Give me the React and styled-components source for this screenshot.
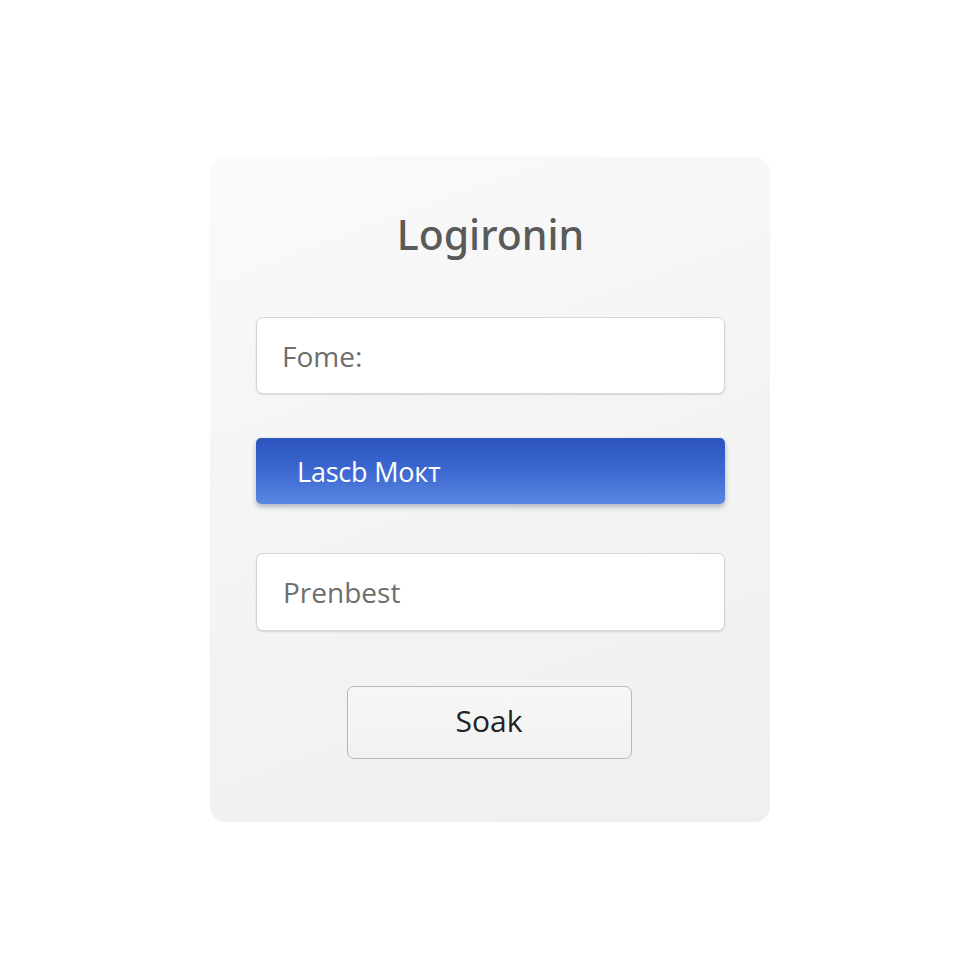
import React from "react";
import styled, { createGlobalStyle } from "styled-components";

const Global = createGlobalStyle`
  html, body { margin: 0; padding: 0; background: #ffffff; }
  body { font-family: "Open Sans", "Noto Sans", "Liberation Sans", sans-serif; }
`;

const Page = styled.div`
  width: 980px;
  height: 980px;
  display: flex;
  justify-content: center;
  padding-top: 157px;
  box-sizing: border-box;
`;

const Card = styled.div`
  width: 560px;
  height: 665px;
  box-sizing: border-box;
  border-radius: 16px;
  background: linear-gradient(160deg, #fafafa 0%, #f3f3f3 55%, #efefef 100%);
  box-shadow: 0 0 1px rgba(0, 0, 0, 0.05);
  padding: 52px 45px 0 46px;
  display: flex;
  flex-direction: column;
`;

const Title = styled.h1`
  margin: 0 0 58px;
  height: 50px;
  line-height: 50px;
  text-align: center;
  font-family: "Noto Sans", "Open Sans", sans-serif;
  font-size: 41px;
  font-weight: 500;
  color: #5a5a5a;
`;

const Field = styled.div`
  height: ${(p) => p.$h}px;
  margin-bottom: ${(p) => p.$mb}px;
  box-sizing: border-box;
  border-radius: 7px;
  background: #ffffff;
  border: 1px solid #d6d6d6;
  box-shadow: 0 1px 2px rgba(0, 0, 0, 0.12);
  display: flex;
  align-items: center;
  padding-left: ${(p) => p.$pl}px;
  font-size: 28px;
  font-weight: 400;
  color: #6e6e6e;
`;

const Selected = styled.div`
  height: 66px;
  margin-bottom: 49px;
  box-sizing: border-box;
  border-radius: 5px;
  background: linear-gradient(180deg, #2c55bf 0%, #3f6ad2 55%, #5a88e2 100%);
  box-shadow: 0 3px 5px rgba(20, 40, 90, 0.3);
  display: flex;
  align-items: center;
  padding-left: 41px;
  font-size: 27px;
  color: #ffffff;
  letter-spacing: -0.2px;
`;

const ButtonRow = styled.div`
  display: flex;
  justify-content: center;
  margin-top: 55px;
  padding-right: 3px;
`;

const Button = styled.button`
  width: 285px;
  height: 73px;
  padding: 0 0 4px;
  border-radius: 7px;
  border: 1px solid #b9b9b9;
  background: linear-gradient(180deg, #f7f7f7, #f1f1f1);
  font-family: "Open Sans", "Noto Sans", sans-serif;
  font-size: 30px;
  color: #222222;
  cursor: pointer;
`;

export default function App() {
  return (
    <>
      <Global />
      <Page>
        <Card>
          <Title>Logironin</Title>
          <Field $h={77} $mb={44} $pl={25}>Fome:</Field>
          <Selected>Lascb Мокт</Selected>
          <Field $h={78} $mb={0} $pl={26}>Prenbest</Field>
          <ButtonRow>
            <Button>Soak</Button>
          </ButtonRow>
        </Card>
      </Page>
    </>
  );
}
